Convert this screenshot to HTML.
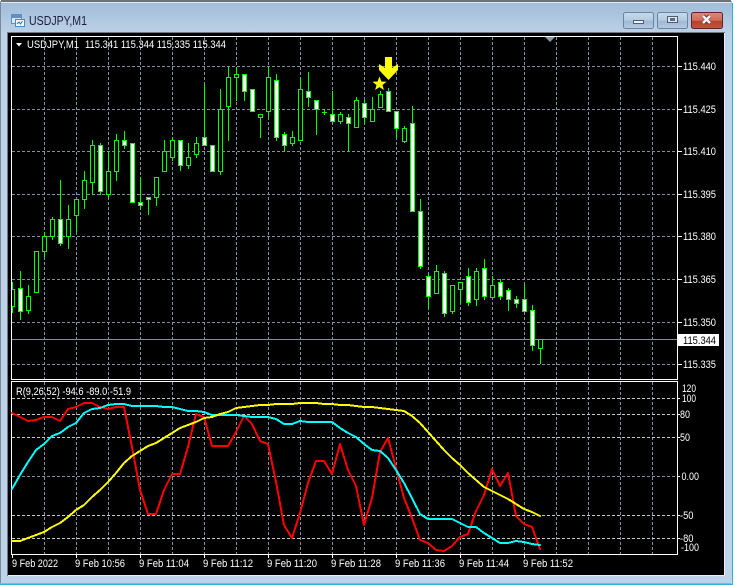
<!DOCTYPE html>
<html><head><meta charset="utf-8"><title>USDJPY,M1</title>
<style>
html,body{margin:0;padding:0;background:#fff;width:735px;height:585px;overflow:hidden}
svg{display:block}
text{font-family:"Liberation Sans",sans-serif;font-size:11px;fill:#fff}
</style></head><body>
<svg width="735" height="585" viewBox="0 0 735 585" xmlns="http://www.w3.org/2000/svg">
<defs>
<linearGradient id="tb" x1="0" y1="0" x2="0" y2="1"><stop offset="0" stop-color="#9fbcd9"/><stop offset="1" stop-color="#bcd1e6"/></linearGradient>
<linearGradient id="bt" x1="0" y1="0" x2="0" y2="1"><stop offset="0" stop-color="#c9dbec"/><stop offset=".5" stop-color="#b3cae1"/><stop offset=".55" stop-color="#9fb9d5"/><stop offset="1" stop-color="#b4cbe2"/></linearGradient>
<linearGradient id="cl" x1="0" y1="0" x2="0" y2="1"><stop offset="0" stop-color="#dd8a7e"/><stop offset=".5" stop-color="#cf6a58"/><stop offset=".55" stop-color="#b8402a"/><stop offset="1" stop-color="#c4553c"/></linearGradient>
</defs>
<rect width="735" height="585" fill="#fff"/>
<rect x="0" y="0" width="732" height="584" rx="3" fill="#bcd3ea"/>
<rect x="0" y="1" width="732" height="32" fill="url(#tb)"/>
<rect x="1" y="0" width="730" height="2" fill="#6d7277"/>
<rect x="0" y="2" width="1" height="581" fill="#7b8a99"/>
<rect x="1" y="2" width="730" height="1" fill="#dfe8f1"/>
<rect x="732" y="3" width="1" height="581" fill="#2fb4cf"/>
<rect x="0" y="584" width="733" height="1" fill="#2fb4cf"/>
<rect x="0" y="583" width="733" height="1" fill="#6fc3d8"/>
<!-- title icon -->
<rect x="11.500" y="14.500" width="10" height="9" fill="#dbe8f5" stroke="#5b8fc8"/>
<rect x="12" y="15" width="9" height="3" fill="#5b8fc8"/>
<rect x="15.500" y="19.500" width="9" height="7" fill="#f4f8fc" stroke="#4f86c4"/>
<path d="M17 24l2-2 1.500 2 2-3" fill="none" stroke="#3a6fb0"/>
<text x="29" y="25" textLength="58" lengthAdjust="spacingAndGlyphs" style="font-size:13px;fill:#1d1d3f">USDJPY,M1</text>
<!-- buttons -->
<rect x="623.500" y="12.500" width="30" height="16" rx="2" fill="url(#bt)" stroke="#6c84a0"/>
<rect x="633.500" y="20.500" width="10" height="3" fill="#eef2f6" stroke="#4e5d70"/>
<rect x="657.500" y="12.500" width="30" height="16" rx="2" fill="url(#bt)" stroke="#6c84a0"/>
<rect x="667.500" y="16.500" width="10" height="6" fill="#dfe6ee" stroke="#4e5d70"/>
<rect x="670" y="18" width="5" height="3" fill="#5b6b80"/>
<rect x="691.500" y="12.500" width="31" height="16" rx="2" fill="url(#cl)" stroke="#5e2530"/>
<path d="M703 16l3.500 2.500L710 16M703 23l3.500-2.500L710 23" fill="none" stroke="#6b3a38" stroke-width="4"/>
<path d="M703 16l7 7M710 16l-7 7" fill="none" stroke="#f3f3f3" stroke-width="2.500"/>
<!-- client -->
<rect x="7" y="32" width="718" height="544" fill="#6d7a86"/>
<rect x="8" y="33" width="716" height="542" fill="#000"/>
<rect x="8" y="575" width="717" height="1" fill="#e8eff6"/>
<rect x="724" y="33" width="1" height="543" fill="#e8eff6"/>
<!-- main grid -->
<g stroke="#7f8fa3" stroke-width="1" stroke-dasharray="3 2" fill="none" shape-rendering="crispEdges">
<path d="M44.500 37V379M76.500 37V379M108.500 37V379M140.500 37V379M172.500 37V379M204.500 37V379M236.500 37V379M268.500 37V379M300.500 37V379M332.500 37V379M364.500 37V379M396.500 37V379M428.500 37V379M460.500 37V379M492.500 37V379M524.500 37V379M556.500 37V379M588.500 37V379M620.500 37V379M652.500 37V379"/>
<path d="M12 66.500H677M12 109.500H677M12 151.500H677M12 194.500H677M12 236.500H677M12 279.500H677M12 322.500H677M12 364.500H677"/>
</g>
<path d="M12 339.500H677" stroke="#7f8fa3" stroke-width="1" shape-rendering="crispEdges"/>
<!-- wicks -->
<path shape-rendering="crispEdges" fill="none" stroke="#00ff00" d="M12.500 282V313M20.500 271V320M28.500 285V314M44.500 232V257M52.500 217V240M60.500 180V246M68.500 205V249M76.500 199V232M84.500 171V209M92.500 140V195M100.500 143V195M108.500 151V198M116.500 134V181M124.500 131V149M140.500 177V209M148.500 197V215M156.500 177V206M164.500 140V171M172.500 137V161M180.500 140V171M188.500 143V169M196.500 137V158M204.500 85V145M220.500 89V175M228.500 67V141M236.500 67V101M244.500 74V101M260.500 114V138M268.500 67V117M276.500 74V141M284.500 132V152M292.500 131V146M300.500 78V141M308.500 72V107M316.500 100V135M324.500 109V115M322 112.500H327M332.500 91V124M340.500 112V124M348.500 114V152M356.500 97V127M364.500 100V124M372.500 97V121M380.500 91V107M388.500 88V111M396.500 111V138M404.500 126V143M412.500 106V211M420.500 199V269M428.500 273V309M436.500 265V293M444.500 271V317M452.500 285V314M460.500 282V303M468.500 268V306M476.500 268V306M484.500 259V300M492.500 276V297M500.500 279V300M508.500 288V311M516.500 296V308M524.500 285V311M532.500 305V351M540.500 339V364"/>
<!-- hollow bodies -->
<g fill="#000" stroke="#00ff00" shape-rendering="crispEdges">
<rect x="10.500" y="289.500" width="4" height="17"/>
<rect x="26.500" y="296.500" width="4" height="14"/>
<rect x="34.500" y="251.500" width="4" height="41"/>
<rect x="42.500" y="236.500" width="4" height="15"/>
<rect x="50.500" y="219.500" width="4" height="17"/>
<rect x="66.500" y="219.500" width="4" height="17"/>
<rect x="74.500" y="199.500" width="4" height="16"/>
<rect x="82.500" y="180.500" width="4" height="19"/>
<rect x="90.500" y="145.500" width="4" height="37"/>
<rect x="106.500" y="171.500" width="4" height="23"/>
<rect x="114.500" y="140.500" width="4" height="31"/>
<rect x="154.500" y="177.500" width="4" height="20"/>
<rect x="162.500" y="151.500" width="4" height="20"/>
<rect x="170.500" y="140.500" width="4" height="17"/>
<rect x="186.500" y="157.500" width="4" height="8"/>
<rect x="194.500" y="143.500" width="4" height="11"/>
<rect x="218.500" y="109.500" width="4" height="62"/>
<rect x="226.500" y="77.500" width="4" height="29"/>
<rect x="234.500" y="74.500" width="4" height="3"/>
<rect x="258.500" y="114.500" width="4" height="3"/>
<rect x="266.500" y="77.500" width="4" height="34"/>
<rect x="290.500" y="137.500" width="4" height="6"/>
<rect x="298.500" y="89.500" width="4" height="51"/>
<rect x="338.500" y="114.500" width="4" height="7"/>
<rect x="354.500" y="100.500" width="4" height="27"/>
<rect x="370.500" y="109.500" width="4" height="12"/>
<rect x="378.500" y="94.500" width="4" height="13"/>
<rect x="402.500" y="128.500" width="4" height="13"/>
<rect x="434.500" y="271.500" width="4" height="22"/>
<rect x="450.500" y="285.500" width="4" height="26"/>
<rect x="458.500" y="282.500" width="4" height="7"/>
<rect x="474.500" y="271.500" width="4" height="28"/>
<rect x="490.500" y="285.500" width="4" height="12"/>
<rect x="538.500" y="339.500" width="4" height="9"/>
</g>
<!-- filled bodies -->
<g fill="#fff" stroke="#00ff00" shape-rendering="crispEdges">
<rect x="18.500" y="288.500" width="4" height="23"/>
<rect x="58.500" y="219.500" width="4" height="24"/>
<rect x="98.500" y="145.500" width="4" height="46"/>
<rect x="122.500" y="140.500" width="4" height="5"/>
<rect x="130.500" y="143.500" width="4" height="59"/>
<rect x="138.500" y="202.500" width="4" height="3"/>
<rect x="146.500" y="197.500" width="4" height="2"/>
<rect x="178.500" y="140.500" width="4" height="25"/>
<rect x="202.500" y="137.500" width="4" height="8"/>
<rect x="210.500" y="145.500" width="4" height="26"/>
<rect x="242.500" y="74.500" width="4" height="17"/>
<rect x="250.500" y="89.500" width="4" height="22"/>
<rect x="274.500" y="80.500" width="4" height="57"/>
<rect x="282.500" y="134.500" width="4" height="11"/>
<rect x="306.500" y="91.500" width="4" height="6"/>
<rect x="314.500" y="100.500" width="4" height="9"/>
<rect x="330.500" y="114.500" width="4" height="7"/>
<rect x="346.500" y="117.500" width="4" height="6"/>
<rect x="362.500" y="103.500" width="4" height="14"/>
<rect x="386.500" y="91.500" width="4" height="20"/>
<rect x="394.500" y="111.500" width="4" height="17"/>
<rect x="410.500" y="123.500" width="4" height="88"/>
<rect x="418.500" y="211.500" width="4" height="55"/>
<rect x="426.500" y="276.500" width="4" height="20"/>
<rect x="442.500" y="273.500" width="4" height="40"/>
<rect x="466.500" y="276.500" width="4" height="26"/>
<rect x="482.500" y="268.500" width="4" height="28"/>
<rect x="498.500" y="282.500" width="4" height="14"/>
<rect x="506.500" y="290.500" width="4" height="9"/>
<rect x="514.500" y="299.500" width="4" height="4"/>
<rect x="522.500" y="299.500" width="4" height="12"/>
<rect x="530.500" y="310.500" width="4" height="35"/>
</g>
<rect x="8" y="280" width="3" height="40" fill="#000"/>
<!-- arrow and star -->
<path d="M385 57H392V68L398 64V70L388.500 80 379 70V64L385 68Z" fill="#ffff00"/>
<path d="M379.500 76.500l1.900 5 5.200.2-4.100 3.300 1.400 5-4.400-2.900-4.400 2.900 1.400-5-4.100-3.300 5.200-.2Z" fill="#ffff00"/>
<!-- top triangle -->
<path d="M545 37H555L550 42Z" fill="#8899a8"/>
<!-- frames -->
<g fill="#fff" shape-rendering="crispEdges">
<rect x="11" y="36" width="667" height="1"/>
<rect x="11" y="379" width="667" height="1"/>
<rect x="11" y="36" width="1" height="344"/>
<rect x="677" y="36" width="1" height="344"/>
<rect x="11" y="381" width="667" height="1"/>
<rect x="11" y="554" width="667" height="1"/>
<rect x="11" y="381" width="1" height="174"/>
<rect x="677" y="381" width="1" height="174"/>
</g>
<!-- price ticks -->
<path shape-rendering="crispEdges" stroke="#fff" d="M678 66.500H682M678 109.500H682M678 151.500H682M678 194.500H682M678 236.500H682M678 279.500H682M678 322.500H682M678 364.500H682M678 398.500H680M678 414.500H680M678 437.500H680M678 476.500H680M678 515.500H680M678 538.500H680M12.500 555V558M76.500 555V558M140.500 555V558M204.500 555V558M268.500 555V558M332.500 555V558M396.500 555V558M460.500 555V558M524.500 555V558"/>
<!-- legend -->
<path d="M16 43H22L19 46.500Z" fill="#fff"/>
<text x="27" y="48" textLength="52" lengthAdjust="spacingAndGlyphs">USDJPY,M1</text>
<text x="85" y="48" textLength="141" lengthAdjust="spacingAndGlyphs">115.341 115.344 115.335 115.344</text>
<!-- price labels -->
<g>
<text x="683" y="70" textLength="33" lengthAdjust="spacingAndGlyphs">115.440</text>
<text x="683" y="113" textLength="33" lengthAdjust="spacingAndGlyphs">115.425</text>
<text x="683" y="155" textLength="33" lengthAdjust="spacingAndGlyphs">115.410</text>
<text x="683" y="198" textLength="33" lengthAdjust="spacingAndGlyphs">115.395</text>
<text x="683" y="240" textLength="33" lengthAdjust="spacingAndGlyphs">115.380</text>
<text x="683" y="283" textLength="33" lengthAdjust="spacingAndGlyphs">115.365</text>
<text x="683" y="326" textLength="33" lengthAdjust="spacingAndGlyphs">115.350</text>
<text x="683" y="368" textLength="33" lengthAdjust="spacingAndGlyphs">115.335</text>
</g>
<rect x="678" y="334" width="41" height="12" fill="#fff"/>
<text x="683" y="344" textLength="33" lengthAdjust="spacingAndGlyphs" style="fill:#000">115.344</text>
<!-- sub grid -->
<g stroke="#7f8fa3" stroke-dasharray="3 2" fill="none" shape-rendering="crispEdges">
<path d="M44.500 382V554M76.500 382V554M108.500 382V554M140.500 382V554M172.500 382V554M204.500 382V554M236.500 382V554M268.500 382V554M300.500 382V554M332.500 382V554M364.500 382V554M396.500 382V554M428.500 382V554M460.500 382V554M492.500 382V554M524.500 382V554M556.500 382V554M588.500 382V554M620.500 382V554M652.500 382V554"/>
<path d="M12 476.500H677"/>
</g>
<path stroke="#c8c8c8" stroke-dasharray="3 2" fill="none" shape-rendering="crispEdges" d="M12 398.500H677M12 414.500H677M12 437.500H677M12 515.500H677M12 538.500H677"/>
<!-- indicator -->
<g fill="none" stroke-width="2" stroke-linejoin="round" stroke-linecap="round" shape-rendering="crispEdges">
<polyline stroke="#ff0000" points="12,413 20,417 28,421 36,420 44,417 52,417 60,421 68,409 76,407 84,403 92,403 100,407 108,409 116,407 124,407 132,447 140,490 148,514 156,514 164,490 172,474 180,474 188,447 196,414 204,417 212,446 220,446 228,446 236,432 244,416 252,424 260,441 268,444 276,482 284,525 292,538 300,513 308,483 316,461 324,461 332,474 340,444 348,470 356,486 364,525 372,498 380,452 388,438 396,468 404,498 412,518 420,540 428,543 436,550 444,551 452,546 460,537 468,534 476,511 484,495 492,469 500,486 508,473 516,516 524,524 532,527 540,549"/>
<polyline stroke="#00ffff" points="12,489 20,475 28,462 36,450 44,444 52,436 60,433 68,427 76,423 84,413 92,409 100,408 108,405 116,404 124,404 132,406 140,406 148,406 156,406 164,407 172,407 180,409 188,411 196,411 204,412 212,415 220,415 228,415 236,415 244,416 252,417 260,417 268,417 276,419 284,424 292,424 300,421 308,422 316,422 324,422 332,422 340,428 348,433 356,437 364,444 372,450 380,451 388,458 396,470 404,483 412,498 420,514 428,519 436,519 444,519 452,519 460,523 468,527 476,527 484,533 492,538 500,543 508,543 516,541 524,542 532,544 540,545"/>
<polyline stroke="#ffff00" points="12,541 20,541 28,538 36,535 44,532 52,527 60,523 68,517 76,510 84,505 92,497 100,490 108,482 116,473 124,463 132,456 140,451 148,446 156,443 164,438 172,433 180,428 188,425 196,422 204,418 212,417 220,414 228,412 236,408 244,407 252,406 260,405 268,405 276,404 284,404 292,404 300,403 308,403 316,403 324,404 332,404 340,405 348,405 356,406 364,407 372,407 380,408 388,409 396,410 404,411 412,416 420,423 428,432 436,441 444,450 452,458 460,465 468,473 476,480 484,487 492,491 500,495 508,499 516,504 524,509 532,512 540,516"/>
</g>
<text x="16" y="395" textLength="115" lengthAdjust="spacingAndGlyphs">R(9,26,52) -94.6 -89.0 -51.9</text>
<!-- sub scale -->
<text x="682" y="392" textLength="14" lengthAdjust="spacingAndGlyphs">120</text>
<text x="682" y="402" textLength="14" lengthAdjust="spacingAndGlyphs">100</text>
<text x="680" y="418" textLength="10" lengthAdjust="spacingAndGlyphs">80</text>
<text x="680" y="441" textLength="10" lengthAdjust="spacingAndGlyphs">50</text>
<text x="681.500" y="480" textLength="17.500" lengthAdjust="spacingAndGlyphs">0.00</text>
<text x="680" y="519" textLength="13.500" lengthAdjust="spacingAndGlyphs">-50</text>
<text x="680" y="542" textLength="13.500" lengthAdjust="spacingAndGlyphs">-80</text>
<text x="681" y="551" textLength="18" lengthAdjust="spacingAndGlyphs">-100</text>
<!-- time axis -->
<text x="12" y="567" textLength="46" lengthAdjust="spacingAndGlyphs">9 Feb 2022</text>
<text x="75" y="567" textLength="50" lengthAdjust="spacingAndGlyphs">9 Feb 10:56</text>
<text x="139" y="567" textLength="50" lengthAdjust="spacingAndGlyphs">9 Feb 11:04</text>
<text x="203" y="567" textLength="50" lengthAdjust="spacingAndGlyphs">9 Feb 11:12</text>
<text x="267" y="567" textLength="50" lengthAdjust="spacingAndGlyphs">9 Feb 11:20</text>
<text x="331" y="567" textLength="50" lengthAdjust="spacingAndGlyphs">9 Feb 11:28</text>
<text x="395" y="567" textLength="50" lengthAdjust="spacingAndGlyphs">9 Feb 11:36</text>
<text x="459" y="567" textLength="50" lengthAdjust="spacingAndGlyphs">9 Feb 11:44</text>
<text x="523" y="567" textLength="50" lengthAdjust="spacingAndGlyphs">9 Feb 11:52</text>
</svg>
</body></html>
